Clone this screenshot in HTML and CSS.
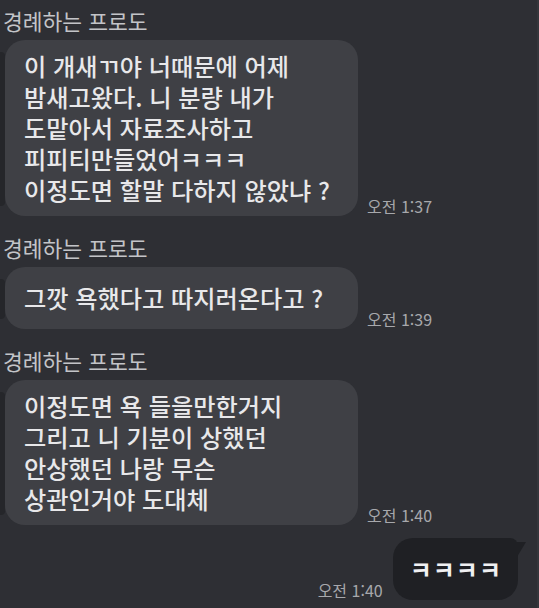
FILE: index.html
```html
<!DOCTYPE html>
<html lang="ko">
<head>
<meta charset="utf-8">
<link rel="stylesheet" href="styles.css">
</head>
<body>
<div class="chat">
  <div class="group">
    <div class="name">경례하는 프로도</div>
    <div class="row">
      <div class="bubble">이 개새ㄲ야 너때문에 어제<br>밤새고왔다. 니 분량 내가<br>도맡아서 자료조사하고<br>피피티만들었어ㅋㅋㅋ<br>이정도면 할말 다하지 않았냐 ?</div>
      <div class="time">오전 1:37</div>
    </div>
  </div>
  <div class="group">
    <div class="name">경례하는 프로도</div>
    <div class="row">
      <div class="bubble bubble-single">그깟 욕했다고 따지러온다고 ?</div>
      <div class="time">오전 1:39</div>
    </div>
  </div>
  <div class="group">
    <div class="name">경례하는 프로도</div>
    <div class="row">
      <div class="bubble">이정도면 욕 들을만한거지<br>그리고 니 기분이 상했던<br>안상했던 나랑 무슨<br>상관인거야 도대체</div>
      <div class="time">오전 1:40</div>
    </div>
  </div>
  <div class="row row-sent">
    <div class="time">오전 1:40</div>
    <div class="bubble-sent">ㅋㅋㅋㅋ</div>
  </div>
</div>
</body>
</html>
```
FILE: styles.css
```css
html, body {
  margin: 0;
  padding: 0;
}
body {
  width: 539px;
  height: 608px;
  overflow: hidden;
  background: #2e2f34;
  font-family: "Noto Sans CJK KR", "Noto Sans", sans-serif;
  border-right: 2px solid #35363b;
  box-sizing: border-box;
}
.chat {
  display: flex;
  flex-direction: column;
  gap: 20px;
  padding-top: 9px;
}
.group {
  display: flex;
  flex-direction: column;
}
.name {
  padding-left: 3px;
  font-size: 21.5px;
  line-height: 24px;
  color: #c3c4c8;
  margin-bottom: 7px;
}
.row {
  display: flex;
  align-items: flex-end;
  gap: 9px;
}
.bubble {
  position: relative;
  margin-left: 5px;
  width: 353px;
  box-sizing: border-box;
  padding: 10px 19px 11px;
  background: #3f4045;
  border-radius: 20px;
  font-size: 24.2px;
  line-height: 31px;
  font-weight: 500;
  color: #e8e8ea;
  white-space: nowrap;
}
.bubble::before {
  content: "";
  position: absolute;
  left: -5px;
  top: 12px;
  bottom: 10px;
  width: 5px;
  background: #25262a;
  border-radius: 0 4px 4px 0;
}
.bubble-single {
  padding-top: 15px;
  padding-bottom: 16px;
}
.time {
  font-size: 16px;
  line-height: 20px;
  color: #a7a8ac;
  white-space: nowrap;
}
.row-sent {
  justify-content: flex-end;
  padding-right: 19px;
  gap: 10px;
  margin-top: -7px;
}
.bubble-sent {
  position: relative;
  padding: 15px 16px 16px 17px;
  background: #1f2024;
  border-radius: 20px 8px 20px 20px;
  font-size: 24px;
  line-height: 31px;
  font-weight: 700;
  letter-spacing: 1px;
  color: #f0f0f2;
}
.bubble-sent::after {
  content: "";
  position: absolute;
  right: -8px;
  top: 4px;
  width: 12px;
  height: 14px;
  background: #1f2024;
  clip-path: polygon(0 0, 100% 0, 30% 100%, 0 100%);
}
```
